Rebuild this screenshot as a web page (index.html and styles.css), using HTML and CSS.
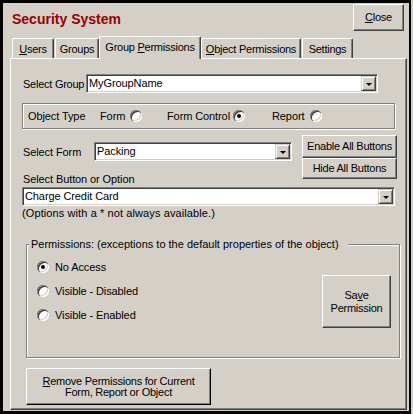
FILE: index.html
```
<!DOCTYPE html>
<html lang="en">
  <head>
    <meta charset="UTF-8" />
    <title>Security System</title>
    <link rel="stylesheet" href="styles.css">
  </head>
  <body>
    <div class="window">
      <div class="header">
        <h1 class="title">Security System</h1>
        <button class="btn close-btn"><u>C</u>lose</button>
      </div>

      <div class="tabs">
        <div class="tab tab-users"><u>U</u>sers</div>
        <div class="tab tab-groups">Groups</div>
        <div class="tab tab-active">Group <u>P</u>ermissions</div>
        <div class="tab tab-objects"><u>O</u>bject Permissions</div>
        <div class="tab tab-settings">Settings</div>
      </div>

      <div class="panel">
        <div class="group-row">
          <span class="group-label">Select Group</span>
          <div class="combo group-combo">
            <span class="combo-text">MyGroupName</span>
            <span class="drop"></span>
          </div>
        </div>

        <div class="object-type">
          <span class="ot-label">Object Type</span>
          <span class="ot-text ot-form">Form</span>
          <span class="radio"></span>
          <span class="ot-text ot-control">Form Control</span>
          <span class="radio checked"></span>
          <span class="ot-text ot-report">Report</span>
          <span class="radio"></span>
        </div>

        <div class="form-section">
          <div class="form-left">
            <div class="form-row">
              <span class="form-label">Select Form</span>
              <div class="combo form-combo">
                <span class="combo-text">Packing</span>
                <span class="drop"></span>
              </div>
            </div>
            <div class="select-label">Select Button or Option</div>
          </div>
          <div class="form-buttons">
            <button class="btn enable-btn">Enable All Buttons</button>
            <button class="btn hide-btn">Hide All Buttons</button>
          </div>
        </div>

        <div class="combo option-combo">
          <span class="combo-text">Charge Credit Card</span>
          <span class="drop"></span>
        </div>
        <div class="note">(Options with a * not always available.)</div>

        <div class="perm-group">
          <div class="perm-legend">Permissions: (exceptions to the default properties of the object)</div>
          <div class="perm-body">
            <div class="perm-list">
              <div class="perm-row"><span class="radio checked"></span>No Access</div>
              <div class="perm-row"><span class="radio"></span>Visible - Disabled</div>
              <div class="perm-row"><span class="radio"></span>Visible - Enabled</div>
            </div>
            <button class="btn save-btn">Sa<u>v</u>e<br />Permission</button>
          </div>
        </div>

        <button class="btn remove-btn"><u>R</u>emove Permissions for Current<br />Form, Report or Object</button>
      </div>
    </div>
  </body>
</html>
```

FILE: styles.css
```
body {
  margin: 0;
  background-color: #d4d0c8;
  font-family: Tahoma, "Liberation Sans", Arial, sans-serif;
  font-size: 11px;
  letter-spacing: -0.1px;
  color: #000;
}

.window {
  width: 406px;
  height: 408px;
  border-style: solid;
  border-color: #000;
  border-width: 3px 2px 3px 3px;
  background-color: #d4d0c8;
  display: flex;
  flex-direction: column;
}

.header {
  display: flex;
  justify-content: space-between;
  height: 33px;
}

.title {
  margin: 0 0 0 9px;
  font-size: 14px;
  line-height: 33px;
  font-weight: bold;
  letter-spacing: normal;
  color: #990000;
}

.btn {
  font: inherit;
  letter-spacing: -0.25px;
  color: #000;
  background-color: #d4d0c8;
  border: 1px solid;
  border-color: #fff #404040 #404040 #fff;
  box-shadow: inset -1px -1px 0 #808080;
  padding: 0;
  box-sizing: border-box;
  line-height: 13px;
}

.close-btn {
  margin: 1px 5px 0 0;
  width: 51px;
  height: 27px;
}

/* tabs */
.tabs {
  display: flex;
  align-items: flex-end;
  height: 22px;
  padding-left: 9px;
  letter-spacing: -0.25px;
}

.tab {
  box-sizing: border-box;
  height: 20px;
  padding-top: 4px;
  line-height: 13px;
  text-align: center;
  white-space: nowrap;
  border-top: 1px solid #fff;
  border-left: 1px solid #fff;
  border-right: 1px solid #404040;
  border-radius: 2px 2px 0 0;
  box-shadow: inset -1px 0 0 #808080;
}

.tab-users {
  width: 42px;
  margin-right: 1px;
}

.tab-groups {
  width: 44px;
}

.tab-active {
  width: 102px;
  height: 23px;
  margin-bottom: -1px;
  padding-top: 4px;
  position: relative;
  z-index: 2;
  background-color: #d4d0c8;
}

.tab-objects {
  width: 100px;
  margin-right: 1px;
}

.tab-settings {
  width: 51px;
}

/* panel */
.panel {
  position: relative;
  margin-left: 7px;
  width: 397px;
  height: 352px;
  box-sizing: border-box;
  border: 1px solid;
  border-color: #fff #404040 #404040 #fff;
  box-shadow: inset -1px -1px 0 #808080;
  white-space: nowrap;
}

.combo {
  display: flex;
  align-items: center;
  height: 19px;
  box-sizing: border-box;
  background-color: #fff;
  border: 1px solid;
  border-color: #808080 #fff #fff #808080;
  box-shadow: inset 1px 1px 0 #404040, inset -1px -1px 0 #d4d0c8;
}

.combo-text {
  flex: 1;
  padding-left: 2px;
  line-height: 13px;
}

.drop {
  width: 15px;
  height: 15px;
  margin-right: 1px;
  box-sizing: border-box;
  display: flex;
  align-items: center;
  justify-content: center;
  background-color: #d4d0c8;
  border: 1px solid;
  border-color: #d4d0c8 #404040 #404040 #d4d0c8;
  box-shadow: inset 1px 1px 0 #fff, inset -1px -1px 0 #808080;
}

.drop::after {
  content: "";
  width: 0;
  height: 0;
  border-left: 3px solid transparent;
  border-right: 3px solid transparent;
  border-top: 3px solid #000;
  margin-top: 1px;
}

.group-row {
  display: flex;
  align-items: center;
  margin: 15px 0 0 12px;
}

.group-label {
  width: 63px;
  letter-spacing: -0.25px;
}

.group-combo {
  width: 292px;
}

.object-type {
  display: flex;
  align-items: center;
  margin: 10px 0 0 11px;
  width: 373px;
  height: 26px;
  box-sizing: border-box;
  padding-left: 5px;
  border: 1px solid #808080;
  box-shadow: 1px 1px 0 #fff, inset 1px 1px 0 #fff;
}

.ot-label {
  width: 72px;
}

.ot-form {
  width: 30px;
}

.ot-control {
  width: 66px;
  margin-left: 25px;
}

.ot-report {
  width: 38px;
  margin-left: 27px;
}

.radio {
  display: inline-flex;
  align-items: center;
  justify-content: center;
  flex: none;
  width: 12px;
  height: 12px;
  border-radius: 50%;
  background-color: #fff;
  box-shadow: inset 1px 1px 0 #808080, inset 2px 2px 0 #404040,
    inset -1px -1px 0 #fff, inset -2px -2px 0 #d4d0c8;
}

.radio.checked::after {
  content: "";
  width: 4px;
  height: 4px;
  border-radius: 50%;
  background-color: #000;
}

.form-section {
  display: flex;
  margin: 6px 0 0 12px;
}

.form-left {
  padding-top: 7px;
}

.form-row {
  display: flex;
  align-items: center;
}

.form-label {
  width: 71px;
}

.form-combo {
  width: 198px;
}

.select-label {
  margin-top: 12px;
  line-height: 13px;
}

.form-buttons {
  display: flex;
  flex-direction: column;
  margin-left: 10px;
}

.enable-btn {
  width: 95px;
  height: 23px;
}

.hide-btn {
  width: 95px;
  height: 21px;
}

.option-combo {
  margin: 1px 0 0 11px;
  width: 373px;
}

.note {
  margin: 1px 0 0 11px;
  line-height: 13px;
  letter-spacing: 0.1px;
}

.perm-group {
  margin: 24px 0 0 15px;
  width: 374px;
  box-sizing: border-box;
  border: 1px solid #808080;
  box-shadow: 1px 1px 0 #fff, inset 1px 1px 0 #fff;
}

.perm-legend {
  width: fit-content;
  margin: -7px 0 0 2px;
  padding: 0 9px 0 2px;
  line-height: 13px;
  letter-spacing: 0;
  background-color: #d4d0c8;
}

.perm-body {
  display: flex;
  justify-content: space-between;
  align-items: flex-start;
  padding: 4px 8px 29px 10px;
}

.perm-row {
  display: flex;
  align-items: center;
  height: 24px;
}

.perm-row .radio {
  margin-right: 6px;
}

.save-btn {
  margin-top: 20px;
  width: 69px;
  height: 53px;
}

.remove-btn {
  display: block;
  margin: 10px 0 0 15px;
  width: 185px;
  height: 37px;
  line-height: 11px;
  border-color: #fff #000 #000 #fff;
}
```
